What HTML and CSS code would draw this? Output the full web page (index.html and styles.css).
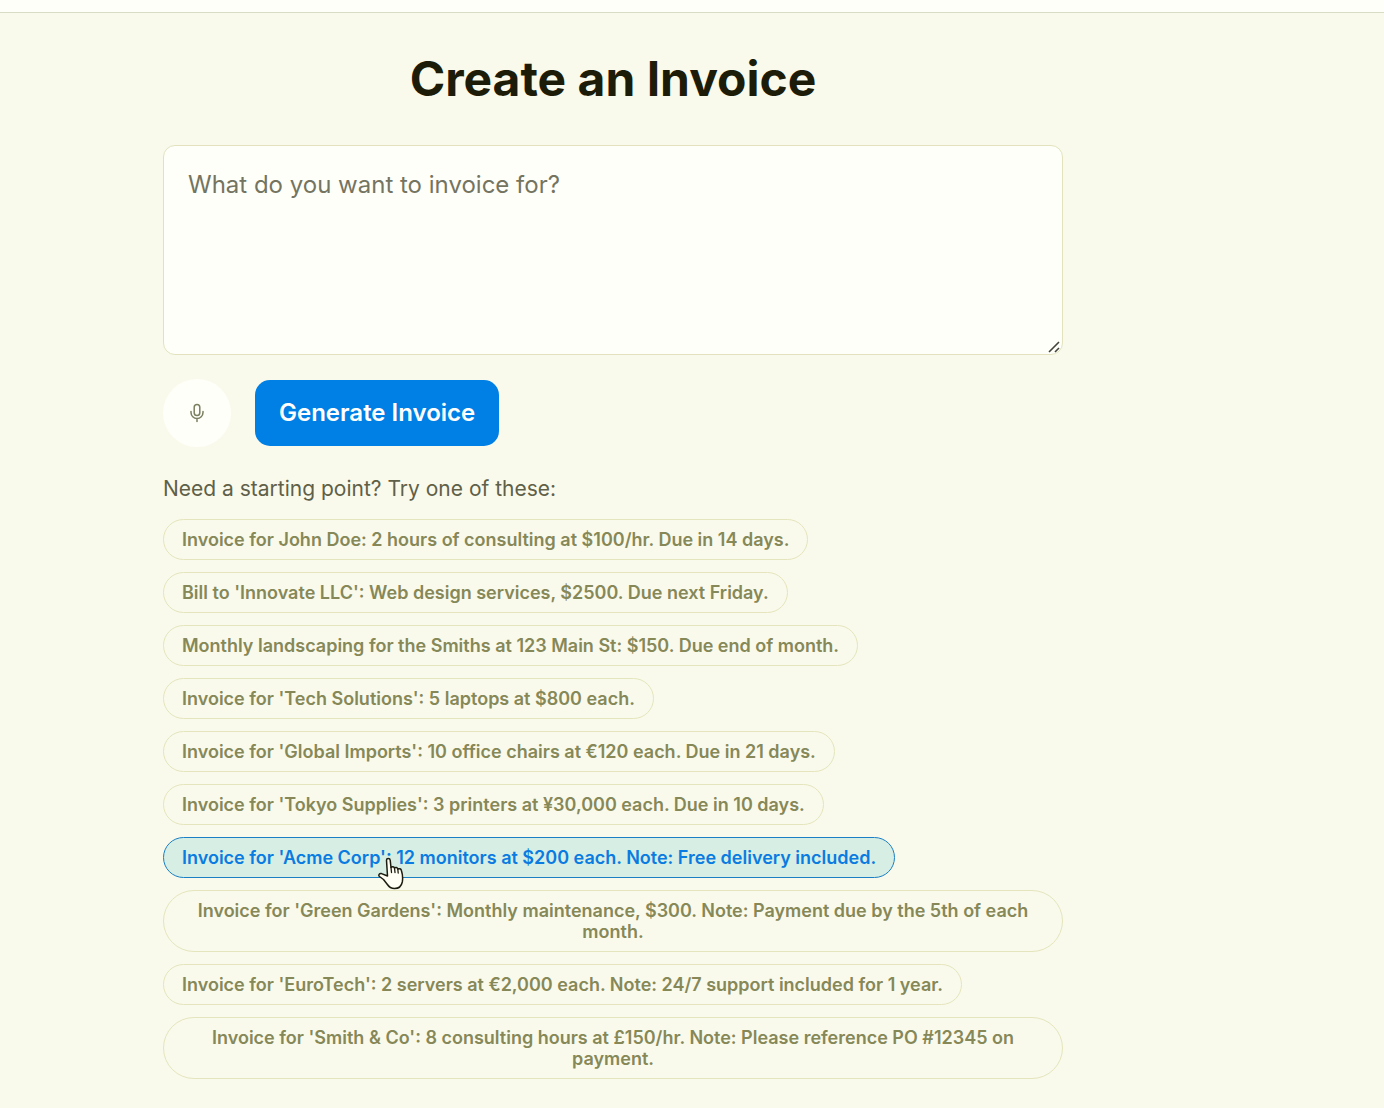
FILE: index.html
```html
<!DOCTYPE html>
<html lang="en">
<head>
  <meta charset="UTF-8" />
  <meta name="viewport" content="width=device-width, initial-scale=1" />
  <title>Create an Invoice</title>
  <link rel="stylesheet" href="styles.css">
</head>
<body>
  <header class="topbar"></header>

  <main class="container">
    <h1>Create an Invoice</h1>
    <form id="invoiceForm">
      <textarea id="prompt" name="prompt" aria-label="Invoice description" placeholder="What do you want to invoice for?"></textarea>
      <div class="actions">
        <button type="button" class="mic-btn" aria-label="Record voice">
          <svg width="20" height="20" viewBox="0 0 20 20" fill="none" stroke="currentColor" stroke-width="1.5" stroke-linecap="round">
            <rect x="7.2" y="1.5" width="5.6" height="11" rx="2.8" />
            <path d="M4 8.500v1a6 6 0 0 0 12 0V8.500M10 15.500v3" />
          </svg>
        </button>
        <button type="submit" class="generate-btn">Generate Invoice</button>
      </div>
    </form>

    <p class="hint">Need a starting point? Try one of these:</p>
    <div class="suggestions">
      <button type="button" class="chip">Invoice for John Doe: 2 hours of consulting at $100/hr. Due in 14 days.</button>
      <button type="button" class="chip">Bill to 'Innovate LLC': Web design services, $2500. Due next Friday.</button>
      <button type="button" class="chip">Monthly landscaping for the Smiths at 123 Main St: $150. Due end of month.</button>
      <button type="button" class="chip">Invoice for 'Tech Solutions': 5 laptops at $800 each.</button>
      <button type="button" class="chip">Invoice for 'Global Imports': 10 office chairs at €120 each. Due in 21 days.</button>
      <button type="button" class="chip">Invoice for 'Tokyo Supplies': 3 printers at ¥30,000 each. Due in 10 days.</button>
      <button type="button" class="chip active">Invoice for 'Acme Corp': 12 monitors at $200 each. Note: Free delivery included.
        <svg class="pointer" width="26" height="34" viewBox="0 0 26 34" aria-hidden="true">
          <path d="M8.500 3.200C8.500 1 12 1 12.200 3.200L13 10.500C14 9.300 16 9.500 16.500 11C17.600 10 19.400 10.500 19.800 12C21.200 11.200 23 11.800 23.400 13.500C24.500 17 25 21 24.300 25C23.500 29 20.500 31.500 16.500 31.500C13 31.500 11 30 9 27L5.500 22.500L1.500 19.500C0 18 1.300 16.200 3.500 16.600L9.500 19Z" fill="#fffff5" stroke="#1c1c10" stroke-width="1.500" stroke-linejoin="round" />
          <path d="M13 10.500L13.500 15.500M16.500 11L17 15.500M19.800 12L20.200 16" fill="none" stroke="#1c1c10" stroke-width="1.300" stroke-linecap="round" />
        </svg>
      </button>
      <button type="button" class="chip">Invoice for 'Green Gardens': Monthly maintenance, $300. Note: Payment due by the 5th of each month.</button>
      <button type="button" class="chip">Invoice for 'EuroTech': 2 servers at €2,000 each. Note: 24/7 support included for 1 year.</button>
      <button type="button" class="chip">Invoice for 'Smith &amp; Co': 8 consulting hours at £150/hr. Note: Please reference PO #12345 on payment.</button>
    </div>
  </main>
</body>
</html>
```
FILE: styles.css
```css
* {
  box-sizing: border-box;
}
body {
  margin: 0;
  font-family: Inter, Arial, sans-serif;
  background: #fafaec;
  color: #1c1c08;
}
button, textarea {
  font-family: inherit;
}
.topbar {
  height: 13px;
  background: #fffffa;
  border-bottom: 1px solid #d8dcc4;
}
.container {
  max-width: 948px;
  margin: 0 auto;
  padding: 36px 24px 28px;
}
h1 {
  margin: 0 0 36px;
  font-size: 48px;
  line-height: 60px;
  font-weight: 700;
  text-align: center;
}
textarea {
  display: block;
  width: 100%;
  height: 210px;
  padding: 24px;
  border: 1px solid #e2e3be;
  border-radius: 12px;
  background: #fffffa;
  font-size: 24px;
  line-height: 29px;
  resize: vertical;
}
textarea::placeholder {
  color: #747460;
}
textarea::-webkit-resizer {
  background: url("data:image/svg+xml,%3Csvg xmlns='http://www.w3.org/2000/svg' width='15' height='15'%3E%3Cpath d='M2 13L12 3M8 13L12 9' stroke='%2344443a' stroke-width='1.6'/%3E%3C/svg%3E") no-repeat;
}
.actions {
  display: flex;
  align-items: center;
  gap: 24px;
  margin: 24px 0;
}
.mic-btn {
  display: flex;
  align-items: center;
  justify-content: center;
  width: 68px;
  height: 68px;
  padding: 0;
  border: none;
  border-radius: 50%;
  background: #fffffa;
  color: #7a7f60;
  cursor: pointer;
}
.generate-btn {
  height: 66px;
  padding: 0 24px 2px;
  border: none;
  border-radius: 15px;
  background: #007fe4;
  color: #fff;
  font-size: 24px;
  font-weight: 600;
  cursor: pointer;
}
.hint {
  margin: 0 0 12px;
  color: #606048;
  font-size: 21px;
  line-height: 36px;
}
.suggestions {
  display: flex;
  flex-direction: column;
  align-items: flex-start;
  gap: 12px;
}
.chip {
  position: relative;
  padding: 9px 18px;
  border: 1px solid #e4e5bc;
  border-radius: 31px;
  background: transparent;
  color: #868858;
  font-size: 18px;
  line-height: 21px;
  font-weight: 600;
  text-align: center;
  cursor: pointer;
}
.chip.active,
.chip:hover {
  border-color: #1a7fc4;
  background: #d6eee4;
  color: #0a7be0;
}
.pointer {
  position: absolute;
  left: 214px;
  top: 19px;
}
/* the page sits beside a wider right gutter on large screens */
@media (min-width: 1200px) {
  body {
    padding-right: 158px;
  }
  .topbar {
    margin-right: -158px;
  }
}
```
